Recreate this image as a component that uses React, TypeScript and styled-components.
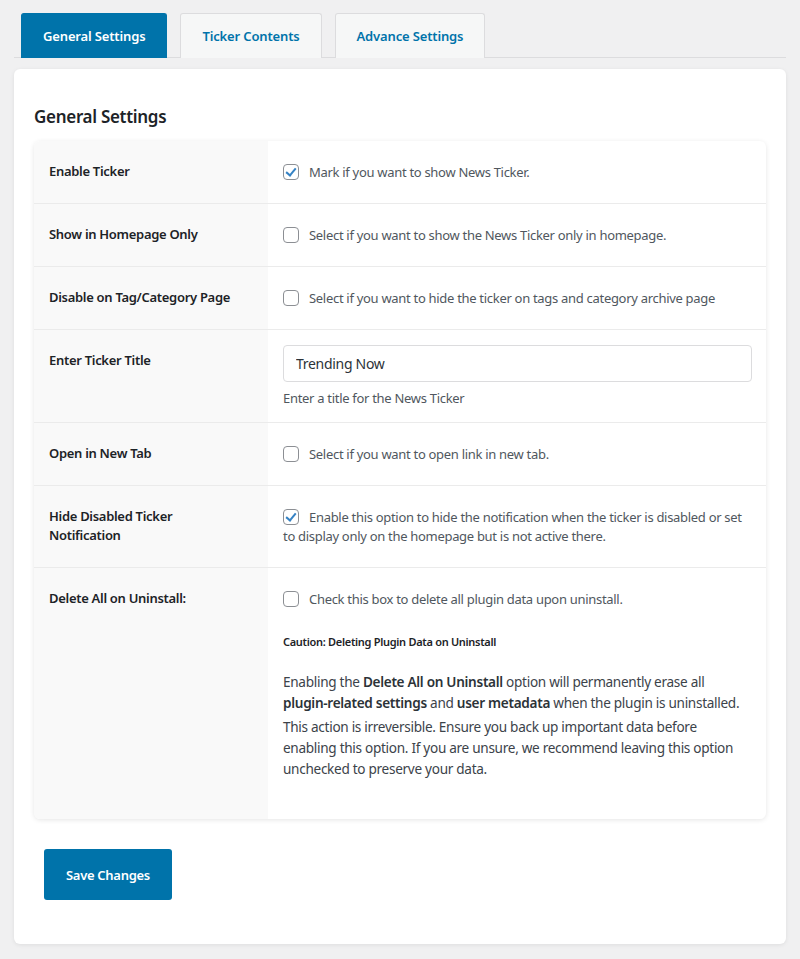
import styled, { createGlobalStyle } from 'styled-components';

let Global = createGlobalStyle`
  body {
    margin: 0;
    background: #f0f0f1;
    font-family: 'Noto Sans', 'Open Sans', sans-serif;
    color: #3c434a;
    font-size: 13px;
    letter-spacing: -0.3px;
  }
`;

let Page = styled.div`
  padding: 13px 14px 15px 14px;
`;

let Tabs = styled.nav`
  display: flex;
  gap: 13px;
  padding-left: 7px;
  border-bottom: 1px solid #dcdcde;
`;

let Tab = styled.button<{ $active?: boolean }>`
  height: 45px;
  padding: 0 21px;
  font-family: inherit;
  letter-spacing: -0.15px;
  font-size: 13px;
  font-weight: 600;
  border: 1px solid ${(p) => (p.$active ? '#0073aa' : '#dcdcde')};
  border-bottom: none;
  border-radius: 3px 3px 0 0;
  background: ${(p) => (p.$active ? '#0073aa' : '#f6f7f7')};
  color: ${(p) => (p.$active ? '#fff' : '#0073aa')};
  margin-bottom: -1px;
  cursor: pointer;
`;

let Card = styled.div`
  margin-top: 11px;
  background: #fff;
  border-radius: 6px;
  box-shadow: 0 1px 4px rgba(0, 0, 0, 0.08);
  padding: 36px 20px 44px 20px;
`;

let Heading = styled.h2`
  margin: 0 0 13px 0;
  font-size: 17px;
  font-weight: 600;
  color: #1d2327;
`;

let Table = styled.div`
  display: grid;
  grid-template-columns: 234px 1fr;
  border-radius: 6px;
  overflow: hidden;
  box-shadow: 0 1px 5px rgba(0, 0, 0, 0.1);
`;

let Label = styled.div<{ $last?: boolean }>`
  background: #f9f9f9;
  padding: 21px 25px 18px 15px;
  font-weight: 600;
  color: #1d2327;
  line-height: 19px;
  border-bottom: ${(p) => (p.$last ? 'none' : '1px solid #ebebeb')};
`;

let Cell = styled.div<{ $last?: boolean; $pad?: string }>`
  padding: ${(p) => p.$pad ?? '22px 15px 21px 15px'};
  line-height: 19px;
  color: #50575e;
  border-bottom: ${(p) => (p.$last ? 'none' : '1px solid #ebebeb')};
`;

let Check = styled.input.attrs({ type: 'checkbox' })`
  appearance: none;
  width: 16px;
  height: 16px;
  margin: 0 10px 0 0;
  border: 1px solid #8c8f94;
  border-radius: 4px;
  background: #fff;
  vertical-align: -3px;
  position: relative;

  &:checked::after {
    content: '';
    position: absolute;
    left: 4px;
    top: 1px;
    width: 4px;
    height: 8px;
    border: solid #3582c4;
    border-width: 0 2.5px 2.5px 0;
    transform: rotate(40deg);
  }
`;

let TextInput = styled.input`
  display: block;
  box-sizing: border-box;
  width: 100%;
  height: 37px;
  padding: 0 12px;
  border: 1px solid #dcdcde;
  border-radius: 4px;
  font-family: inherit;
  letter-spacing: inherit;
  font-size: 14px;
  color: #2c3338;
`;

let Hint = styled.p`
  margin: 7px 0 0 0;
  color: #50575e;
`;

let Caution = styled.h4`
  margin: 23px 0 0 0;
  font-size: 11px;
  font-weight: 600;
  color: #1d2327;
`;

let Para = styled.p<{ $gap?: number }>`
  margin: ${(p) => p.$gap ?? 0}px 0 0 0;
  font-size: 13.6px;
  line-height: 21px;
  color: #3c434a;

  b {
    font-weight: 600;
    color: #2c3338;
  }
`;

let SaveButton = styled.button`
  margin: 30px 0 0 10px;
  height: 51px;
  padding: 0 22px;
  background: #0073aa;
  border: none;
  border-radius: 3px;
  color: #fff;
  font-family: inherit;
  letter-spacing: inherit;
  font-size: 13px;
  font-weight: 600;
  cursor: pointer;
`;

let rows = [
  { label: 'Enable Ticker', text: 'Mark if you want to show News Ticker.', checked: true },
  { label: 'Show in Homepage Only', text: 'Select if you want to show the News Ticker only in homepage.' },
  {
    label: 'Disable on Tag/Category Page',
    text: 'Select if you want to hide the ticker on tags and category archive page'
  }
];

export default function App() {
  return (
    <Page>
      <Global />
      <Tabs>
        <Tab $active>General Settings</Tab>
        <Tab>Ticker Contents</Tab>
        <Tab>Advance Settings</Tab>
      </Tabs>

      <Card>
        <Heading>General Settings</Heading>
        <Table>
          {rows.map((r) => (
            <>
              <Label key={r.label}>{r.label}</Label>
              <Cell>
                <Check defaultChecked={r.checked} />
                {r.text}
              </Cell>
            </>
          ))}

          <Label>Enter Ticker Title</Label>
          <Cell $pad="15px 14px 14px 15px">
            <TextInput defaultValue="Trending Now" />
            <Hint>Enter a title for the News Ticker</Hint>
          </Cell>

          <Label>Open in New Tab</Label>
          <Cell>
            <Check />
            Select if you want to open link in new tab.
          </Cell>

          <Label>Hide Disabled Ticker Notification</Label>
          <Cell $pad="22px 15px 21px 15px">
            <Check defaultChecked />
            Enable this option to hide the notification when the ticker is disabled or set to display only on the
            homepage but is not active there.
          </Cell>

          <Label $last>Delete All on Uninstall:</Label>
          <Cell $last $pad="22px 15px 40px 15px">
            <Check />
            Check this box to delete all plugin data upon uninstall.
            <Caution>Caution: Deleting Plugin Data on Uninstall</Caution>
            <Para $gap={20}>
              Enabling the <b>Delete All on Uninstall</b> option will permanently erase all{' '}
              <b>plugin-related settings</b> and <b>user metadata</b> when the plugin is uninstalled.
            </Para>
            <Para $gap={3}>
              This action is irreversible. Ensure you back up important data before enabling this option. If you are
              unsure, we recommend leaving this option unchecked to preserve your data.
            </Para>
          </Cell>
        </Table>
        <SaveButton>Save Changes</SaveButton>
      </Card>
    </Page>
  );
}
